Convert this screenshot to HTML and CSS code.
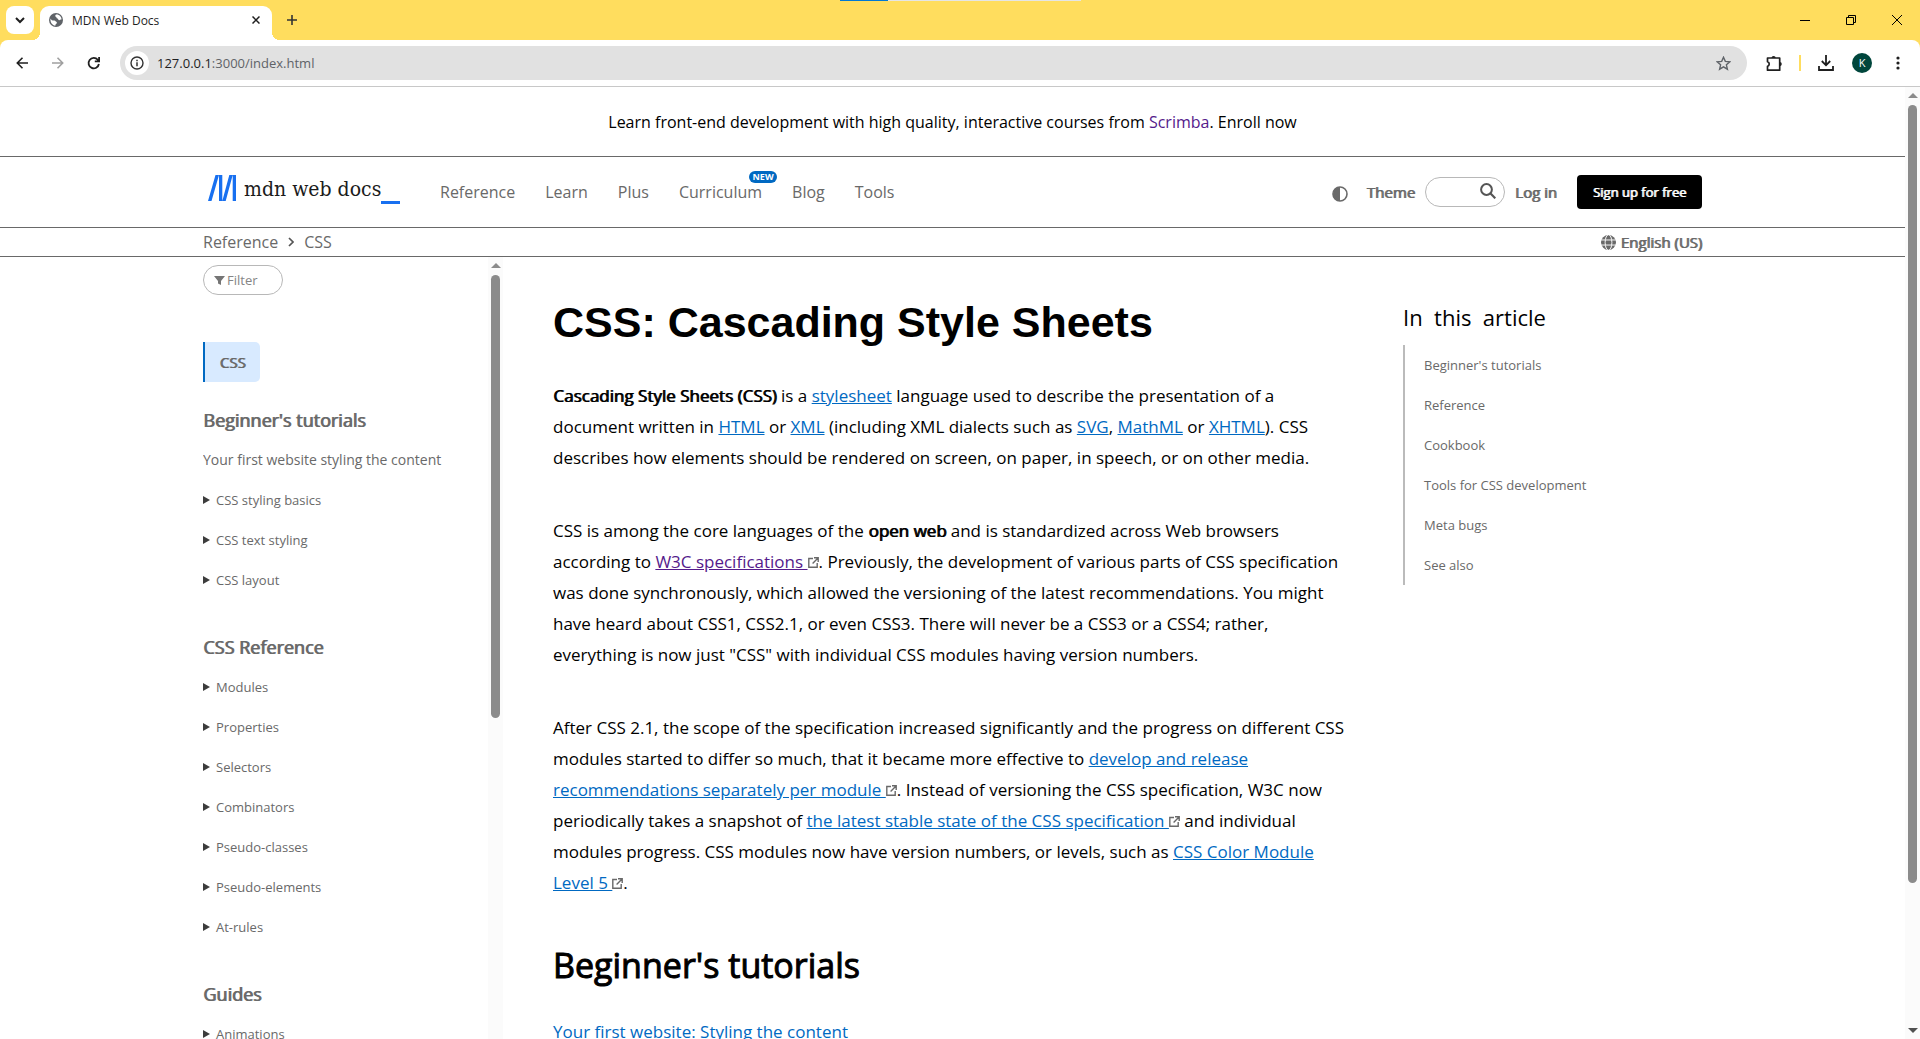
FILE: index.html
```html
<!DOCTYPE html>
<html lang="en-US">
<head>
<meta charset="utf-8">
<meta name="viewport" content="width=device-width, initial-scale=1">
<title>MDN Web Docs</title>
<link rel="stylesheet" href="styles.css">
</head>
<body>
<svg class="sprite" aria-hidden="true">
  <symbol id="external" viewBox="0 0 11 11"><path d="M5 1.5H.8v8.7h8.4V6M6 .8h4.2V5M10 1 4.6 6.4" fill="none" stroke="#696969" stroke-width="1.4"/></symbol>
</svg>

<header class="browser">
  <div class="tabstrip">
    <button class="tab-search" aria-label="Search tabs"><svg width="10" height="7" viewBox="0 0 10 7"><path d="m1 1 4 4 4-4" fill="none" stroke="#1f1f1f" stroke-width="2"/></svg></button>
    <div class="tab">
      <svg class="tab-icon" width="14" height="14" viewBox="0 0 14 14"><circle cx="7" cy="7" r="7" fill="#5f6368"/><path d="M1.5 5.5c1 2 2.500 2.200 4 2 .8 0 1 1 1.800 1.200 1 .3.600 1.800-.2 2.300-.8.500-.8 1.200-.7 1.700C3.500 12.200 1 9.800 1.500 5.500zM7 1.500c-1.200 1-.8 2-.2 2.200.9.300.5 1.500 1.600 1.700 1 .2.700 1.600 1.800 1.800.9.100 1.200-.8 2.300-.6.300-2.600-2-5.400-5.500-5.100z" fill="#fff"/></svg>
      <span class="tab-title">MDN Web Docs</span>
      <button class="tab-close" aria-label="Close tab"><svg width="8" height="8" viewBox="0 0 8 8"><path d="m.5.5 7 7m0-7-7 7" stroke="#1f1f1f" stroke-width="1.500"/></svg></button>
    </div>
    <button class="tab-new" aria-label="New tab"><svg width="10" height="10" viewBox="0 0 10 10"><path d="M5 0v10M0 5h10" stroke="#333" stroke-width="1.600"/></svg></button>
    <div class="progress" aria-hidden="true"><span class="progress-done"></span></div>
    <div class="window-buttons">
      <button aria-label="Minimize"><svg width="10" height="10" viewBox="0 0 10 10"><path d="M0 5.500h10" stroke="#000"/></svg></button>
      <button aria-label="Restore"><svg width="10" height="10" viewBox="0 0 10 10"><path d="M.5 2.500h7v7h-7zM2.500 2.500v-2h7v7h-2" fill="none" stroke="#000"/></svg></button>
      <button aria-label="Close"><svg width="10" height="10" viewBox="0 0 10 10"><path d="m0 0 10 10M10 0 0 10" stroke="#000"/></svg></button>
    </div>
  </div>
  <div class="toolbar">
    <button class="tool" aria-label="Back"><svg width="12" height="12" viewBox="0 0 12 12"><path d="M12 6H1.500M6.500.8 1.300 6l5.200 5.200" fill="none" stroke="#1f1f1f" stroke-width="1.600"/></svg></button>
    <button class="tool" aria-label="Forward"><svg width="12" height="12" viewBox="0 0 12 12"><path d="M0 6h10.500M5.500.8 10.700 6l-5.200 5.200" fill="none" stroke="#a0a0a0" stroke-width="1.600"/></svg></button>
    <button class="tool" aria-label="Reload"><svg width="14" height="14" viewBox="0 0 14 14"><path d="M11.900 8A5.200 5.200 0 1 1 10.800 3.800l1.100 1.200M12.100 1v4.300H7.800" fill="none" stroke="#1f1f1f" stroke-width="1.800"/></svg></button>
    <div class="omnibox">
      <button class="site-info" aria-label="View site information"><svg width="14" height="14" viewBox="0 0 14 14"><circle cx="7" cy="7" r="6" fill="none" stroke="#333" stroke-width="1.400"/><path d="M7 6.200v4M7 3.700v1.500" stroke="#333" stroke-width="1.500"/></svg></button>
      <span class="url"><span class="url-host">127.0.0.1</span>:3000/index.html</span>
      <button class="star" aria-label="Bookmark this tab"><svg width="15" height="15" viewBox="0 0 15 15"><path d="m7.500 1.300 1.800 4.100 4.500.4-3.400 3 1 4.400-3.900-2.300-3.900 2.300 1-4.400-3.400-3 4.500-.4z" fill="none" stroke="#5f6368" stroke-width="1.400"/></svg></button>
    </div>
    <button class="tool" aria-label="Extensions"><svg width="17" height="17" viewBox="0 0 17 17"><path d="M1.500 3h12.200v12.200H1.500v-3.800a2.400 2.400 0 0 0 0-4.600z" fill="none" stroke="#1f1f1f" stroke-width="1.700" stroke-linejoin="round"/><path d="M5.500 3a2.100 2.100 0 0 1 4.200 0zM13.700 7a2.100 2.100 0 0 1 0 4.200z" fill="#1f1f1f"/></svg></button>
    <span class="divider"></span>
    <button class="tool" aria-label="Downloads"><svg width="16" height="16" viewBox="0 0 16 16"><path d="M8 0v10M3.800 6 8 10.300 12.200 6M1 11v4h14v-4" fill="none" stroke="#1f1f1f" stroke-width="1.800"/></svg></button>
    <button class="tool" aria-label="Profile"><span class="avatar">K</span></button>
    <button class="tool" aria-label="Menu"><svg width="4" height="14" viewBox="0 0 4 14"><g fill="#1f1f1f"><circle cx="2" cy="2" r="1.600"/><circle cx="2" cy="7" r="1.600"/><circle cx="2" cy="12" r="1.600"/></g></svg></button>
  </div>
</header>

<div class="window">
  <div class="page">
    <p class="banner">Learn front-end development with high quality, interactive courses from&nbsp;<a class="visited" href="#">Scrimba</a>. Enroll now</p>

    <header class="masthead">
      <div class="wrap masthead-row">
        <a class="logo" href="#">
          <svg width="28" height="26" viewBox="0 0 28 26" aria-hidden="true"><path d="M7.500 0h3.500L3.500 26H0zM11 0h3.300v26H11zM21.300 0h3.400l-7 26h-3.400zM24.700 0H28v26h-3.300z" fill="#1870f0"/></svg>
          <span class="logo-text">mdn web docs</span>
          <span class="logo-cursor"></span>
        </a>
        <nav class="menu">
          <a href="#">Reference</a>
          <a href="#">Learn</a>
          <a href="#">Plus</a>
          <a class="has-badge" href="#">Curriculum<span class="badge">NEW</span></a>
          <a href="#">Blog</a>
          <a href="#">Tools</a>
        </nav>
        <div class="actions">
          <button class="theme"><svg width="16" height="16" viewBox="0 0 16 16"><circle cx="8" cy="8" r="7" fill="none" stroke="#696969" stroke-width="1.600"/><path d="M8 1a7 7 0 0 0 0 14z" fill="#696969"/></svg>Theme</button>
          <div class="search">
            <input class="pill" type="text" aria-label="Search">
            <svg class="search-icon" width="16" height="16" viewBox="0 0 16 16"><circle cx="6.500" cy="6.500" r="5.400" fill="none" stroke="#555" stroke-width="2"/><path d="m10.300 10.300 5 5" stroke="#555" stroke-width="2.200"/></svg>
          </div>
          <a class="login" href="#">Log in</a>
          <button class="signup">Sign up for free</button>
        </div>
      </div>
    </header>

    <div class="crumbs">
      <div class="wrap crumbs-row">
        <nav class="trail" aria-label="Breadcrumb">
          <a href="#">Reference</a>
          <svg width="6" height="10" viewBox="0 0 6 10"><path d="m1 1 4 4-4 4" fill="none" stroke="#555" stroke-width="1.700"/></svg>
          <a href="#">CSS</a>
        </nav>
        <button class="language"><svg width="15" height="15" viewBox="0 0 16 16"><circle cx="8" cy="8" r="8" fill="#696969"/><path d="M0 5.300h16M0 10.700h16" stroke="#fff"/><ellipse cx="8" cy="8" rx="3.600" ry="8.300" fill="none" stroke="#fff"/></svg>English (US)</button>
      </div>
    </div>

    <div class="wrap columns">
      <aside class="sidebar">
        <div class="sidebar-content">
          <div class="filter">
            <input class="pill filter-input" type="text" placeholder="Filter" aria-label="Filter">
            <svg class="filter-icon" width="11" height="9" viewBox="0 0 11 9"><path d="M0 0h11L7 5v4L4 7.500V5z" fill="#757575"/></svg>
          </div>
          <a class="current" href="#">CSS</a>
          <h2>Beginner's tutorials</h2>
          <a class="lead" href="#">Your first website styling the content</a>
          <details><summary>CSS styling basics</summary></details>
          <details><summary>CSS text styling</summary></details>
          <details><summary>CSS layout</summary></details>
          <h2>CSS Reference</h2>
          <details><summary>Modules</summary></details>
          <details><summary>Properties</summary></details>
          <details><summary>Selectors</summary></details>
          <details><summary>Combinators</summary></details>
          <details><summary>Pseudo-classes</summary></details>
          <details><summary>Pseudo-elements</summary></details>
          <details><summary>At-rules</summary></details>
          <h2>Guides</h2>
          <details><summary>Animations</summary></details>
        </div>
        <div class="scrollbar" aria-hidden="true"><span class="arrow-up"></span><span class="thumb thumb-sidebar"></span></div>
      </aside>

      <main class="article">
        <h1>CSS: Cascading Style Sheets</h1>
        <p><strong>Cascading Style Sheets (CSS)</strong> is a <a href="#">stylesheet</a> language used to describe the presentation of a document written in <a href="#">HTML</a> or <a href="#">XML</a> (including XML dialects such as <a href="#">SVG</a>, <a href="#">MathML</a> or <a href="#">XHTML</a>). CSS describes how elements should be rendered on screen, on paper, in speech, or on other media.</p>
        <p>CSS is among the core languages of the <strong>open web</strong> and is standardized across Web browsers according to <a class="visited" href="#">W3C specifications <svg class="ext"><use href="#external"/></svg></a>. Previously, the development of various parts of CSS specification was done synchronously, which allowed the versioning of the latest recommendations. You might have heard about CSS1, CSS2.1, or even CSS3. There will never be a CSS3 or a CSS4; rather, everything is now just "CSS" with individual CSS modules having version numbers.</p>
        <p>After CSS 2.1, the scope of the specification increased significantly and the progress on different CSS modules started to differ so much, that it became more effective to <a href="#">develop and release recommendations separately per module <svg class="ext"><use href="#external"/></svg></a>. Instead of versioning the CSS specification, W3C now periodically takes a snapshot of <a href="#">the latest stable state of the CSS specification <svg class="ext"><use href="#external"/></svg></a> and individual modules progress. CSS modules now have version numbers, or levels, such as <a href="#">CSS Color Module Level 5 <svg class="ext"><use href="#external"/></svg></a>.</p>
        <h2>Beginner's tutorials</h2>
        <a href="#">Your first website: Styling the content</a>
      </main>

      <aside class="toc">
        <h2>In  this  article</h2>
        <ul>
          <li><a href="#">Beginner's tutorials</a></li>
          <li><a href="#">Reference</a></li>
          <li><a href="#">Cookbook</a></li>
          <li><a href="#">Tools for CSS development</a></li>
          <li><a href="#">Meta bugs</a></li>
          <li><a href="#">See also</a></li>
        </ul>
      </aside>
    </div>
  </div>
  <div class="scrollbar" aria-hidden="true"><span class="arrow-up"></span><span class="thumb thumb-page"></span><span class="arrow-down"></span></div>
</div>
</body>
</html>
```
FILE: styles.css
```css
* { box-sizing: border-box; }

body {
  margin: 0;
  height: 100vh;
  display: flex;
  flex-direction: column;
  overflow: hidden;
  background: #fff;
  color: #000;
  font: 16px/24px "Open Sans", "Noto Sans", sans-serif;
}

h1, h2, p, ul { margin: 0; padding: 0; }
button { border: 0; padding: 0; background: none; font: inherit; color: inherit; display: flex; align-items: center; justify-content: center; }
input { font: inherit; }
a { color: #0069c2; }
svg { flex: none; }
.visited { color: #551a8b; }
.sprite { position: absolute; width: 0; height: 0; }

/* Browser frame */
.browser { flex: none; background: #ffdd5e; border-bottom: 1px solid #c8c8c8; }
.tabstrip { position: relative; display: flex; align-items: center; height: 40px; padding-left: 6px; }
.tab-search { width: 28px; height: 28px; border-radius: 8px; background: #fff; }
.tab {
  position: relative;
  display: flex;
  align-items: center;
  align-self: flex-end;
  width: 232px;
  height: 34px;
  margin-left: 6px;
  padding: 0 12px 6px 9px;
  border-radius: 9px 9px 0 0;
  background: #fff;
  font-size: 12px;
  color: #1f1f1f;
}
.tab::before, .tab::after { content: ""; position: absolute; bottom: 0; width: 8px; height: 8px; }
.tab::before { right: 100%; background: radial-gradient(circle at 0 0, #ffdd5e 8px, #fff 8px); }
.tab::after { left: 100%; background: radial-gradient(circle at 100% 0, #ffdd5e 8px, #fff 8px); }
.tab-title { flex: 1; margin: 2px 0 0 9px; }
.tab-new { width: 28px; height: 28px; margin-left: 6px; }
.progress { position: absolute; top: 0; left: calc(50% - 120px); width: 241px; height: 1px; background: #e5e5e5; }
.progress-done { display: block; width: 20%; height: 1px; background: #0078d4; }
.window-buttons { display: flex; margin-left: auto; }
.window-buttons button { width: 46px; height: 40px; }

.toolbar { display: flex; align-items: center; height: 46px; padding: 0 4px; background: #fff; border-radius: 8px 8px 0 0; }
.tool { width: 36px; height: 34px; }
.omnibox { flex: 1; display: flex; align-items: center; height: 34px; margin: 0 9px 0 8px; padding: 0 12px 0 5px; border-radius: 17px; background: #e1e1e1; }
.site-info { width: 24px; height: 24px; border-radius: 12px; background: #fff; }
.url { flex: 1; margin-left: 8px; font-size: 13px; color: #5f6368; }
.url-host { color: #1f1f1f; }
.star { width: 24px; height: 24px; }
.divider { width: 2px; height: 16px; margin: 0 7px; background: #ffdd5e; }
.avatar { width: 20px; height: 20px; border-radius: 10px; background: #00463c; color: #fff; font-size: 11px; line-height: 20px; }

/* Scrollbars */
.window { flex: 1; min-height: 0; display: flex; }
.scrollbar { flex: none; width: 15px; display: flex; flex-direction: column; align-items: center; padding: 6px 0; background: #fbfbfb; }
.arrow-up, .arrow-down { flex: none; border: 5px solid transparent; border-top: 0; border-bottom: 5px solid #8b8b8b; }
.arrow-down { margin-top: auto; border-top: 5px solid #505050; border-bottom: 0; }
.thumb { width: 9px; margin-top: 7px; border-radius: 5px; background: #8b8b8b; }
.thumb-page { height: calc(83% - 2px); }
.thumb-sidebar { height: 443px; }

/* Page */
.page { flex: 1; min-width: 0; overflow: hidden; display: flex; flex-direction: column; }
.wrap { width: 100%; max-width: 1499px; margin: 0 auto; }
.banner { flex: none; padding: 23px 0 22px; text-align: center; }
.banner a, .menu a, .trail a, .toc a, .login, .logo { text-decoration: none; }

.masthead { flex: none; border-top: 1px solid #696969; border-bottom: 1px solid #696969; color: #696969; }
.masthead-row { display: flex; align-items: center; height: 70px; }
.logo { display: flex; align-items: flex-end; height: 29px; margin: 0 40px 5px 5px; }
.logo svg { align-self: flex-start; }
.logo-text { width: 137px; margin: 0 0 3px 8px; white-space: nowrap; color: #1b1b1b; font: 21px/24px "DejaVu Serif Condensed", "DejaVu Serif", serif; }
.logo-cursor { width: 19px; height: 3px; background: #1870f0; }
.menu { display: flex; gap: 30px; }
.menu a, .trail a, .login { color: #696969; }
.has-badge { position: relative; }
.badge { position: absolute; top: -9px; right: -15px; width: 28px; height: 12px; border-radius: 6px; background: #0069c2; color: #fff; font-size: 9px; font-weight: 700; line-height: 12px; text-align: center; }
.actions { display: flex; align-items: center; margin-left: auto; }
.theme { gap: 19px; }
.theme svg { margin-top: 4px; }
.theme, .login, .language, .current, .signup, .sidebar h2, strong { font-weight: 400; text-shadow: 1px 0 0 currentColor; }
.theme, .login, .language, .current { font-size: 15px; }
.search { position: relative; margin: 0 10px; }
.pill { display: block; width: 80px; height: 30px; padding: 0 30px 0 12px; border: 1px solid #b8b8b8; border-radius: 15px; background: #fff; }
.search-icon { position: absolute; top: 6px; right: 9px; }
.signup { height: 34px; margin-left: 20px; padding: 0 16px; border-radius: 4px; background: #000; color: #fff; font-size: 13px; }

.crumbs { flex: none; border-bottom: 1px solid #696969; color: #696969; }
.crumbs-row { display: flex; align-items: center; justify-content: space-between; height: 28px; }
.trail { display: flex; align-items: center; gap: 10px; }
.language { gap: 4px; }

.columns { flex: 1; min-height: 0; display: grid; grid-template-columns: 300px 1fr 299px; gap: 50px; }

.sidebar { display: flex; min-height: 0; overflow: hidden; color: #696969; }
.sidebar-content { flex: 1; padding-top: 8px; }
.filter { position: relative; margin-bottom: 47px; }
.filter-input { padding: 0 8px 0 23px; font-size: 13px; }
.filter-input::placeholder { color: #858585; }
.filter-icon { position: absolute; top: 11px; left: 11px; }
.current { display: block; width: 57px; border-left: 2px solid #0069c2; border-radius: 0 5px 5px 0; background: #d8eaff; line-height: 40px; text-align: center; text-decoration: none; color: #696969; }
.sidebar h2 { margin-top: 27px; font-size: 18px; line-height: 40px; }
.current + h2 { margin-top: 18px; }
.lead { display: block; font-size: 14px; line-height: 40px; color: #696969; text-decoration: none; }
summary { display: flex; align-items: center; font-size: 13px; line-height: 40px; list-style: none; }
summary::-webkit-details-marker { display: none; }
summary::before { content: ""; margin-right: 6px; border: 4px solid transparent; border-left: 7px solid #3c3c3c; border-right: 0; }

.article { font-size: 17px; line-height: 31px; }
.article h1 { margin: 40px 0 33px; font: 700 43px/50px "Liberation Sans", Arial, sans-serif; }
.article p { margin-bottom: 42px; }
.article h2 { margin: 0 0 26px; font-size: 34px; font-weight: 400; line-height: 50px; -webkit-text-stroke: 1px; }
.ext { width: 11px; height: 11px; }

.toc h2 { margin: 45px 0 13px; font-size: 22px; font-weight: 400; line-height: 30px; white-space: pre-wrap; }
.toc ul { list-style: none; padding-left: 19px; border-left: 2px solid #bbb; }
.toc li { font-size: 13px; line-height: 40px; }
.toc a { color: #696969; }
```
